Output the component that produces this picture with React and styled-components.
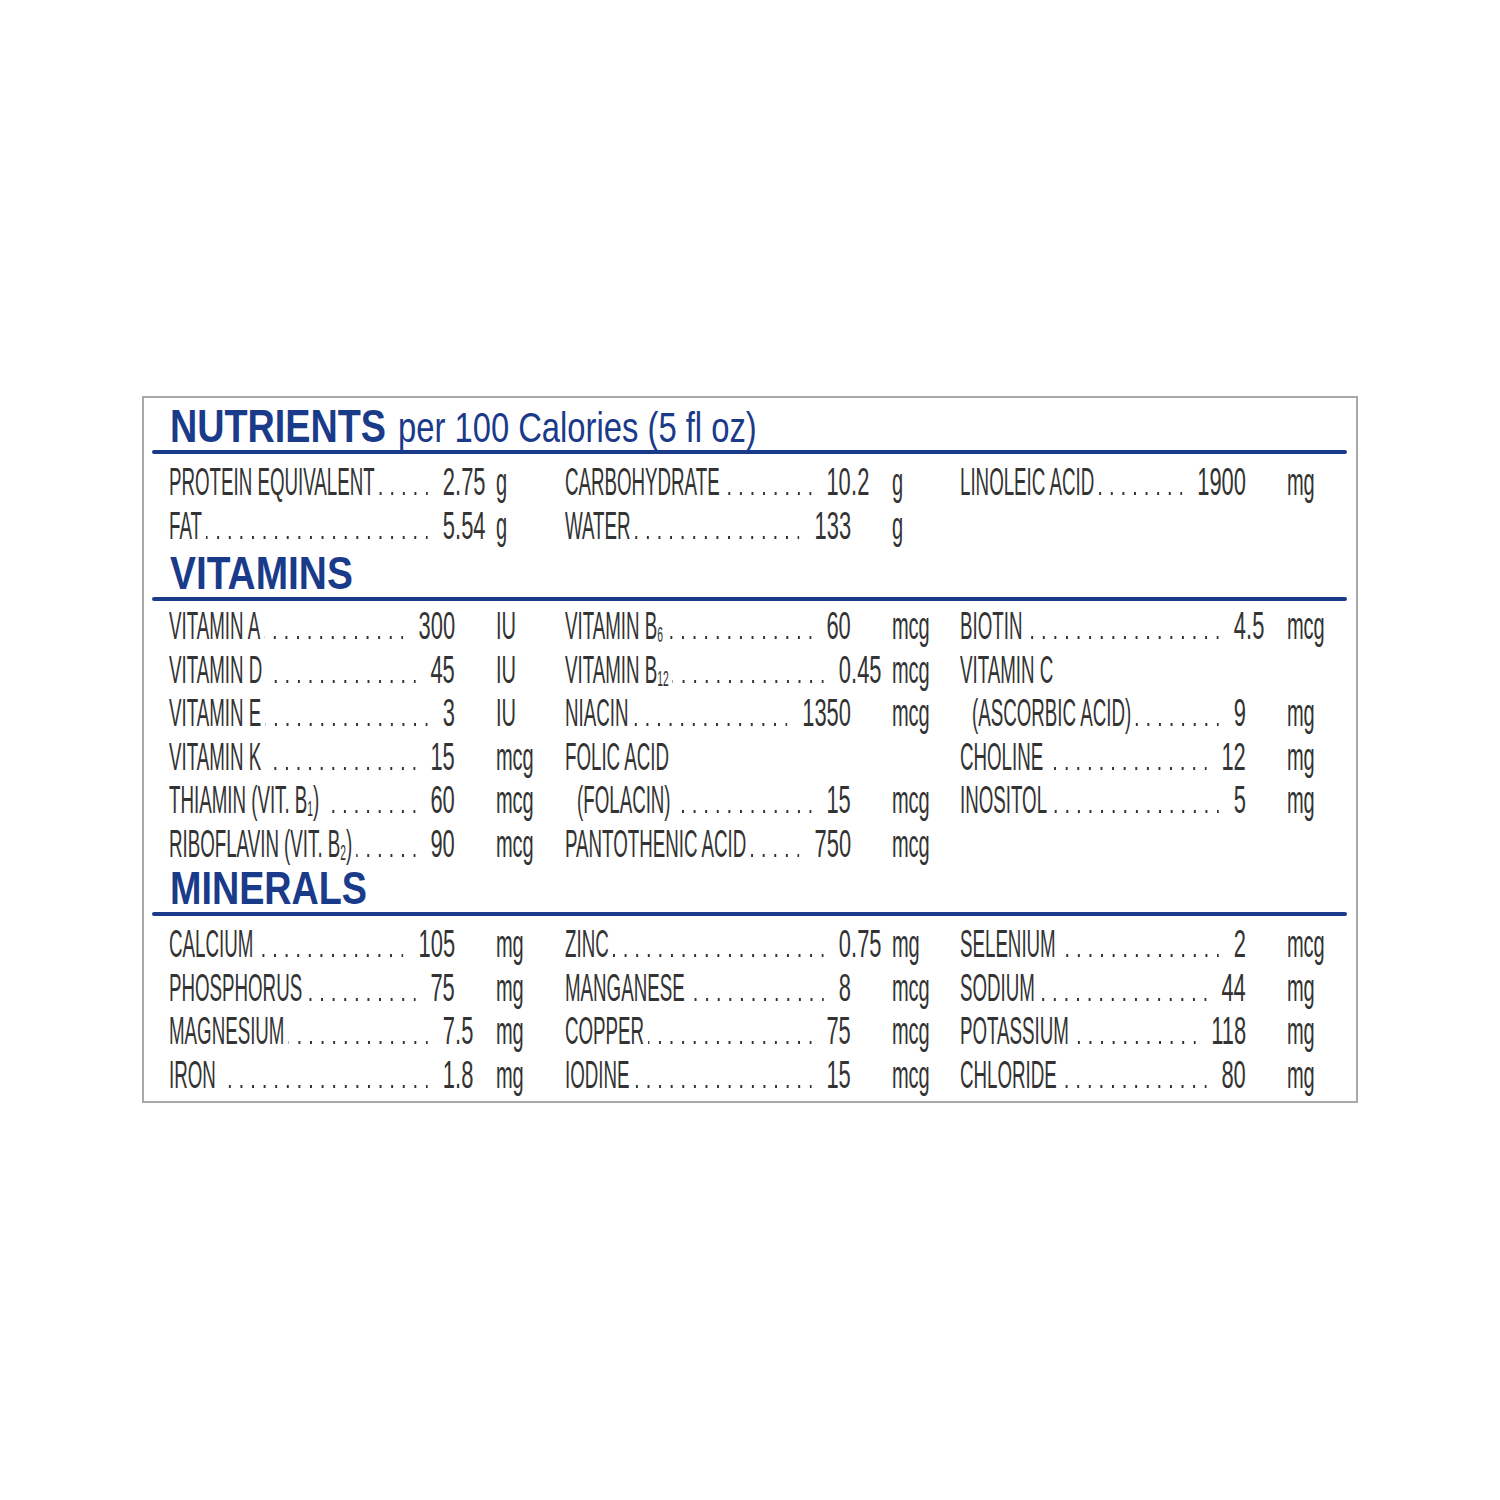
import React from "react";
import styled, { createGlobalStyle } from "styled-components";

// the label face is a very condensed grotesque; squeeze Liberation Sans to match
const S = 0.48;
const u = (px) => `${px / S}px`;
// figures in the original face are wider than the squeezed letters
const NUM = 1.17;
const FS = 39;
const DIGIT = 0.556 * FS;

const BLUE = "#1a3a8a";
const INK = "#333333";

const GlobalStyle = createGlobalStyle`
  html, body {
    margin: 0;
    padding: 0;
    background: #fff;
    overflow: hidden;
  }
  body {
    font-family: "Liberation Sans", Arial, sans-serif;
  }
`;

const Page = styled.div`
  width: 1500px;
  height: 1500px;
  box-sizing: border-box;
  padding: 396px 0 0 142px;
`;

const Card = styled.div`
  width: 1216px;
  box-sizing: border-box;
  border: 2px solid #a9a9a9;
  padding: 5px 9px 5px 8px;
`;

const Heading = styled.div`
  height: ${(p) => p.$h}px;
  display: flex;
  align-items: flex-end;
  padding-left: 18px;
  color: ${BLUE};
  white-space: nowrap;
`;

const HeadLine = styled.div`
  height: 47px;
  line-height: 47px;
  display: flex;
  align-items: baseline;
`;

const WordSlot = styled.div`
  width: ${(p) => (p.$w ? `${p.$w}px` : "auto")};
  flex: none;
`;

const BoldWord = styled.span`
  display: inline-block;
  font-size: 46px;
  font-weight: 700;
  transform: scaleX(${(p) => p.$sx || 0.82});
  transform-origin: left center;
`;

const LightWord = styled.span`
  display: inline-block;
  font-size: 42px;
  font-weight: 400;
  transform: scaleX(0.78);
  transform-origin: left center;
`;

const Rule = styled.div`
  height: 4px;
  border-radius: 2px;
  background: ${BLUE};
`;

const Columns = styled.div`
  display: grid;
  grid-template-columns: repeat(3, 395.5px);
  padding: ${(p) => p.$top}px 0 0 17px;
`;

const Column = styled.div`
  min-width: 0;
`;

const Squeeze = styled.div`
  width: ${u(395.5)};
  transform: scaleX(${S});
  transform-origin: left top;
`;

const Row = styled.div`
  height: 43.5px;
  line-height: 43.5px;
  font-size: ${FS}px;
  color: ${INK};
  display: grid;
  grid-template-columns: ${u(286)} ${u(41)} 1fr;
  white-space: nowrap;
`;

const Lead = styled.div`
  display: flex;
  min-width: 0;
  padding-left: ${(p) => (p.$indent ? u(12) : "0")};
`;

const Label = styled.span`
  flex: none;
`;

const Dots = styled.span`
  flex: 1;
  margin: 0 ${u(15)} 0 ${u(4)};
  background-image: linear-gradient(
    to right,
    transparent 0 ${u(9.7)},
    #333 ${u(9.7)} ${u(11.6)}
  );
  background-size: ${u(11.6)} 3px;
  background-repeat: repeat-x;
  background-position: right 0 top 32px;
`;

const Int = styled.span`
  flex: none;
  display: inline-block;
  margin-left: ${(p) => p.$n * DIGIT * (NUM - 1)}px;
  transform: scaleX(${NUM});
  transform-origin: right center;
`;

const Frac = styled.span`
  display: inline-block;
  transform: scaleX(${NUM});
  transform-origin: left center;
`;

const Unit = styled.span`
  display: inline-block;
  transform: scaleX(1.07);
  transform-origin: left center;
`;

const Sub = styled.sub`
  font-size: 0.55em;
  line-height: 0;
  vertical-align: -0.15em;
`;

const nutrients = [
  [
    { label: "PROTEIN EQUIVALENT", int: "2", frac: ".75", unit: "g" },
    { label: "FAT", int: "5", frac: ".54", unit: "g" },
  ],
  [
    { label: "CARBOHYDRATE", int: "10", frac: ".2", unit: "g" },
    { label: "WATER", int: "133", unit: "g" },
  ],
  [{ label: "LINOLEIC ACID", int: "1900", unit: "mg" }],
];

const vitamins = [
  [
    { label: "VITAMIN A", int: "300", unit: "IU" },
    { label: "VITAMIN D", int: "45", unit: "IU" },
    { label: "VITAMIN E", int: "3", unit: "IU" },
    { label: "VITAMIN K", int: "15", unit: "mcg" },
    {
      label: (
        <>
          THIAMIN (VIT. B<Sub>1</Sub>)
        </>
      ),
      int: "60",
      unit: "mcg",
    },
    {
      label: (
        <>
          RIBOFLAVIN (VIT. B<Sub>2</Sub>)
        </>
      ),
      int: "90",
      unit: "mcg",
    },
  ],
  [
    {
      label: (
        <>
          VITAMIN B<Sub>6</Sub>
        </>
      ),
      int: "60",
      unit: "mcg",
    },
    {
      label: (
        <>
          VITAMIN B<Sub>12</Sub>
        </>
      ),
      int: "0",
      frac: ".45",
      unit: "mcg",
    },
    { label: "NIACIN", int: "1350", unit: "mcg" },
    { label: "FOLIC ACID", only: true },
    { label: "(FOLACIN)", int: "15", unit: "mcg", indent: true },
    { label: "PANTOTHENIC ACID", int: "750", unit: "mcg" },
  ],
  [
    { label: "BIOTIN", int: "4", frac: ".5", unit: "mcg" },
    { label: "VITAMIN C", only: true },
    { label: "(ASCORBIC ACID)", int: "9", unit: "mg", indent: true },
    { label: "CHOLINE", int: "12", unit: "mg" },
    { label: "INOSITOL", int: "5", unit: "mg" },
  ],
];

const minerals = [
  [
    { label: "CALCIUM", int: "105", unit: "mg" },
    { label: "PHOSPHORUS", int: "75", unit: "mg" },
    { label: "MAGNESIUM", int: "7", frac: ".5", unit: "mg" },
    { label: "IRON", int: "1", frac: ".8", unit: "mg" },
  ],
  [
    { label: "ZINC", int: "0", frac: ".75", unit: "mg" },
    { label: "MANGANESE", int: "8", unit: "mcg" },
    { label: "COPPER", int: "75", unit: "mcg" },
    { label: "IODINE", int: "15", unit: "mcg" },
  ],
  [
    { label: "SELENIUM", int: "2", unit: "mcg" },
    { label: "SODIUM", int: "44", unit: "mg" },
    { label: "POTASSIUM", int: "118", unit: "mg" },
    { label: "CHLORIDE", int: "80", unit: "mg" },
  ],
];

function NutrientRow({ item }) {
  if (item.only) {
    return (
      <Row>
        <Lead>
          <Label>{item.label}</Label>
        </Lead>
      </Row>
    );
  }
  return (
    <Row>
      <Lead $indent={item.indent}>
        <Label>{item.label}</Label>
        <Dots />
        <Int $n={item.int.length}>{item.int}</Int>
      </Lead>
      <Frac>{item.frac || ""}</Frac>
      <Unit>{item.unit}</Unit>
    </Row>
  );
}

function Section({ title, sub, titleWidth, sx, headH = 47, top = 6, cols }) {
  return (
    <>
      <Heading $h={headH}>
        <HeadLine>
          <WordSlot $w={titleWidth}>
            <BoldWord $sx={sx}>{title}</BoldWord>
          </WordSlot>
          {sub && <LightWord>{sub}</LightWord>}
        </HeadLine>
      </Heading>
      <Rule />
      <Columns $top={top}>
        {cols.map((col, i) => (
          <Column key={i}>
            <Squeeze>
              {col.map((item, j) => (
                <NutrientRow key={j} item={item} />
              ))}
            </Squeeze>
          </Column>
        ))}
      </Columns>
    </>
  );
}

export default function App() {
  return (
    <Page>
      <GlobalStyle />
      <Card>
        <Section
          title="NUTRIENTS"
          sub="per 100 Calories (5 fl oz)"
          titleWidth={228}
          cols={nutrients}
        />
        <Section title="VITAMINS" sx={0.845} headH={50} top={3} cols={vitamins} />
        <Section title="MINERALS" cols={minerals} />
      </Card>
    </Page>
  );
}
